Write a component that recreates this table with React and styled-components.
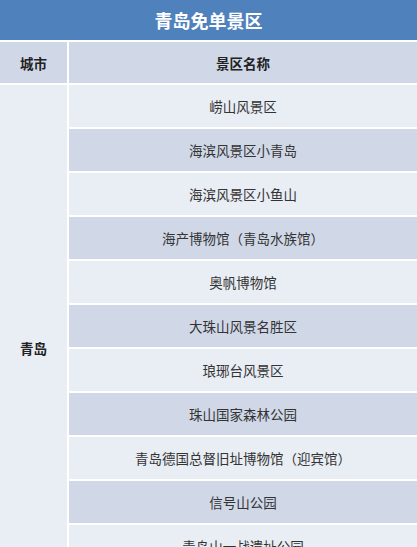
import React from "react";
import styled, { createGlobalStyle } from "styled-components";

const Global = createGlobalStyle`
  body {
    margin: 0;
    background: #ffffff;
    font-family: "Noto Sans CJK SC", "Noto Sans", sans-serif;
    overflow: hidden;
  }
`;

const Table = styled.div`
  display: grid;
  grid-template-columns: 67px 1fr;
  grid-template-rows: 40px 41px;
  grid-auto-rows: 42px;
  gap: 2px;
  background: #ffffff;
  width: 417px;
`;

const Title = styled.div`
  grid-column: 1 / 3;
  background: #4f81bd;
  color: #ffffff;
  font-size: 18px;
  font-weight: 700;
  display: flex;
  align-items: center;
  justify-content: center;
`;

const HeadCell = styled.div`
  background: #d0d8e8;
  color: #222;
  font-size: 13.5px;
  font-weight: 700;
  display: flex;
  align-items: center;
  justify-content: center;
`;

const CityCell = styled.div`
  grid-row: span ${(p) => p.$span};
  background: #e9edf4;
  color: #222;
  font-size: 13.5px;
  font-weight: 700;
  display: flex;
  align-items: center;
  justify-content: center;
`;

const Cell = styled.div`
  grid-column: 2;
  background: ${(p) => (p.$alt ? "#d0d8e8" : "#e9edf4")};
  color: #333;
  font-size: 13.5px;
  display: flex;
  align-items: center;
  justify-content: center;
  white-space: nowrap;
`;

const spots = [
  "崂山风景区",
  "海滨风景区小青岛",
  "海滨风景区小鱼山",
  "海产博物馆（青岛水族馆）",
  "奥帆博物馆",
  "大珠山风景名胜区",
  "琅琊台风景区",
  "珠山国家森林公园",
  "青岛德国总督旧址博物馆（迎宾馆）",
  "信号山公园",
  "青岛山一战遗址公园",
  "中山公园",
];

export default function App() {
  return (
    <>
      <Global />
      <Table>
        <Title>青岛免单景区</Title>
        <HeadCell>城市</HeadCell>
        <HeadCell>景区名称</HeadCell>
        <CityCell $span={spots.length}>青岛</CityCell>
        {spots.map((s, i) => (
          <Cell key={s} $alt={i % 2 === 1}>
            {s}
          </Cell>
        ))}
      </Table>
    </>
  );
}
